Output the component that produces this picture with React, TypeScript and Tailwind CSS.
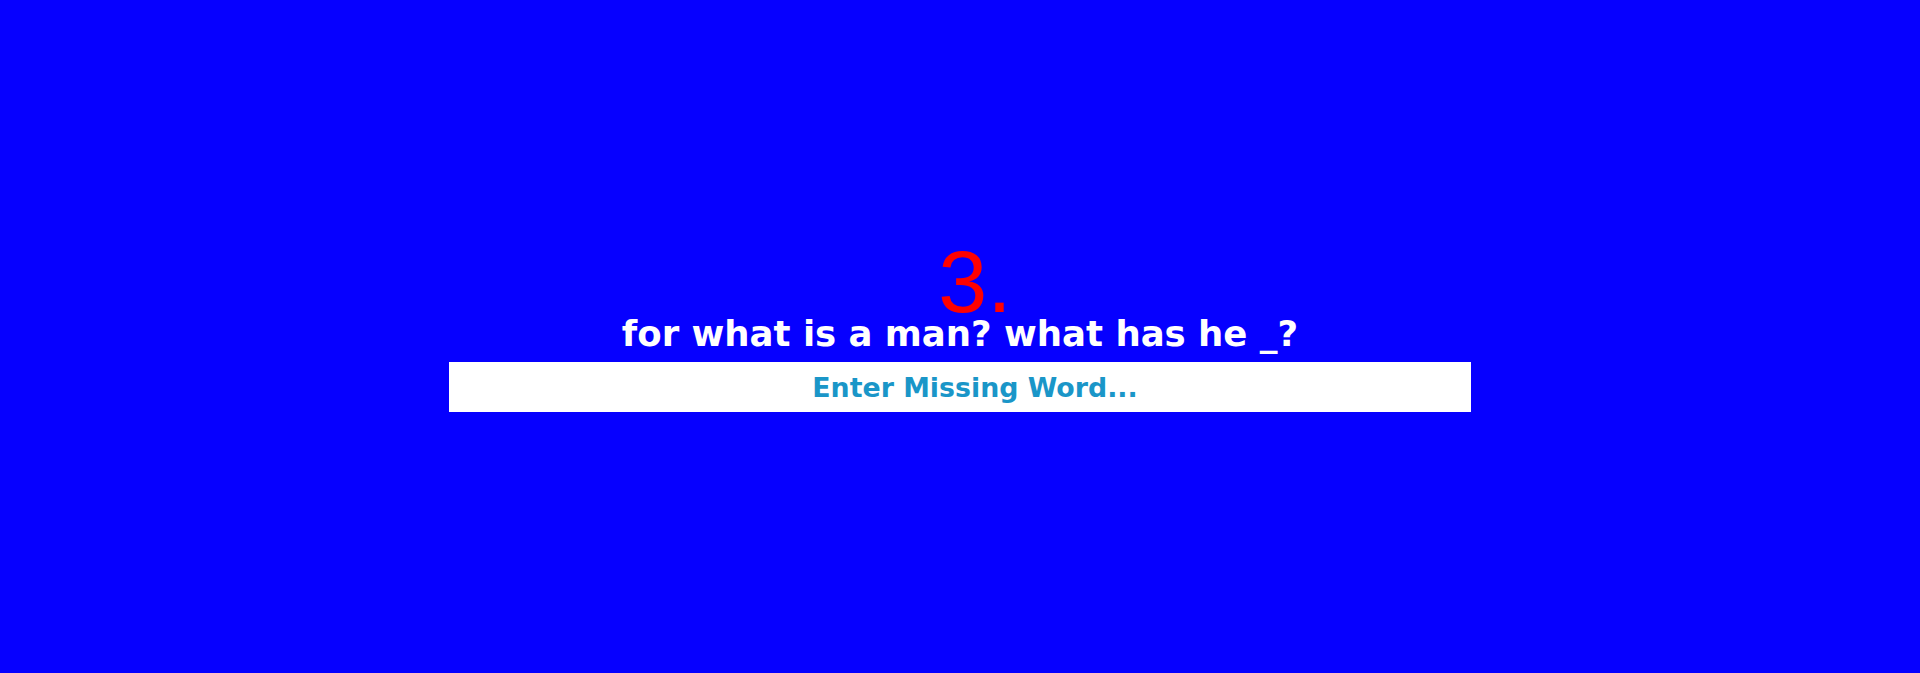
export default function App() {
  return (
    <div className="h-[673px] w-full bg-[#0600ff] flex flex-col items-center pt-[238px] overflow-hidden">
      <div className="pl-[30px] text-[88px] leading-none h-[88px] text-[#ff0000] font-['Liberation_Sans',Arial,sans-serif]">
        3.
      </div>
      <p className="mt-[-10px] h-[36px] text-[35.5px] leading-none font-bold text-white font-['DejaVu_Sans',sans-serif]">
        for what is a man? what has he _?
      </p>
      <input
        type="text"
        placeholder="Enter Missing Word..."
        className="mt-[10px] w-[1022px] h-[50px] bg-white pl-[30px] text-center text-[26.8px] font-bold text-[#1a96c8] placeholder:text-[#1a96c8] outline-none font-['DejaVu_Sans',sans-serif]"
      />
    </div>
  );
}
